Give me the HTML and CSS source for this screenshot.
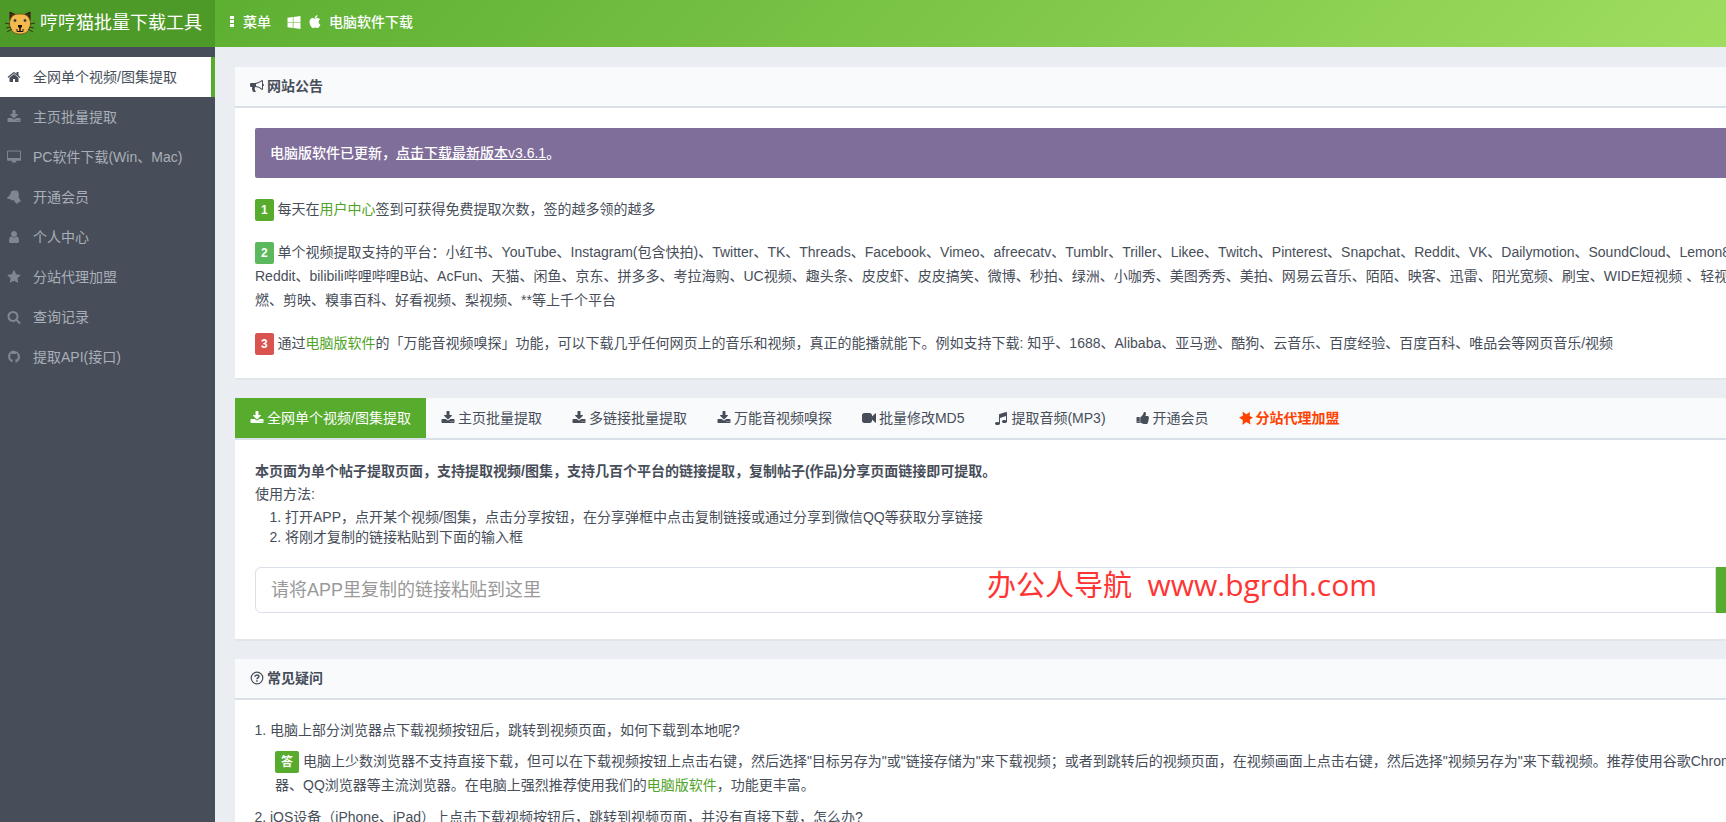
FILE: index.html
```html
<!DOCTYPE html>
<html lang="zh-CN">
<head>
  <meta charset="utf-8">
  <title>哼哼猫批量下载工具</title>
  <meta name="viewport" content="width=device-width, initial-scale=1">
  <link rel="stylesheet" href="styles.css">
</head>
<body>

  <!-- icon set -->
  <svg class="icon-defs" aria-hidden="true">
    <symbol id="i-home" viewBox="0 0 1792 1792"><path d="M1472 992v480q0 26-19 45t-45 19h-384v-384h-256v384h-384q-26 0-45-19t-19-45v-480q0-1 .5-3t.5-3l575-474 575 474q1 2 1 6zm223-69l-62 74q-8 9-21 11h-3q-13 0-21-7l-692-577-692 577q-12 8-24 7-13-2-21-11l-62-74q-8-10-7-23.5t11-21.5l719-599q32-26 76-26t76 26l244 204v-195q0-14 9-23t23-9h192q14 0 23 9t9 23v408l219 182q10 8 11 21.5t-7 23.5z"/></symbol>
    <symbol id="i-download" viewBox="0 0 1792 1792"><path d="M1344 1344q0-26-19-45t-45-19-45 19-19 45 19 45 45 19 45-19 19-45zm256 0q0-26-19-45t-45-19-45 19-19 45 19 45 45 19 45-19 19-45zm128-224v320q0 40-28 68t-68 28h-1472q-40 0-68-28t-28-68v-320q0-40 28-68t68-28h465l135 136q58 56 136 56t136-56l136-136h464q40 0 68 28t28 68zm-325-569q17 41-14 70l-448 448q-18 19-45 19t-45-19l-448-448q-31-29-14-70 17-39 59-39h256v-448q0-26 19-45t45-19h256q26 0 45 19t19 45v448h256q42 0 59 39z"/></symbol>
    <symbol id="i-desktop" viewBox="-64 0 1920 1792"><path d="M1728 992v-832q0-13-9.5-22.5t-22.5-9.5h-1600q-13 0-22.5 9.5t-9.5 22.5v832q0 13 9.5 22.5t22.5 9.5h1600q13 0 22.5-9.5t9.5-22.5zm128-832v1088q0 66-47 113t-113 47h-544q0 37 16 77.5t32 71 16 43.5q0 26-19 45t-45 19h-512q-26 0-45-19t-19-45q0-14 16-44t32-70 16-78h-544q-66 0-113-47t-47-113v-1088q0-66 47-113t113-47h1600q66 0 113 47t47 113z"/></symbol>
    <symbol id="i-vip" viewBox="0 0 14 14"><path d="M4 1.500C6 .2 8.500.2 10.500.8L12 4l-.5 3L14 11.500l-2.500.5-1 2-2.500-1.500-1-2.500-2 .5-2-1.500L.8 9 0 7.500 2 6l1.500-2z"/></symbol>
    <symbol id="i-user" viewBox="0 0 1792 1792"><path d="M1536 1399q0 109-62.5 187t-150.5 78h-854q-88 0-150.5-78t-62.5-187q0-85 8.5-160.5t31.5-152 58.5-131 94-89 134.5-34.5q131 128 313 128t313-128q76 0 134.5 34.5t94 89 58.5 131 31.5 152 8.5 160.5zm-256-887q0 159-112.5 271.5t-271.5 112.5-271.5-112.5-112.5-271.5 112.5-271.5 271.5-112.5 271.5 112.5 112.5 271.5z"/></symbol>
    <symbol id="i-star" viewBox="0 0 1792 1792"><path d="M1728 647q0 22-26 48l-363 354 86 500q1 7 1 20 0 21-10.5 35.5t-30.5 14.5q-19 0-40-12l-449-236-449 236q-22 12-40 12-21 0-31.5-14.5t-10.5-35.5q0-6 2-20l86-500-364-354q-25-27-25-48 0-37 56-46l502-73 225-455q19-41 49-41t49 41l225 455 502 73q56 9 56 46z"/></symbol>
    <symbol id="i-search" viewBox="0 0 1792 1792"><path d="M1216 832q0-185-131.5-316.5t-316.5-131.5-316.5 131.5-131.5 316.5 131.5 316.5 316.5 131.5 316.5-131.5 131.5-316.5zm512 832q0 52-38 90t-90 38q-54 0-90-38l-343-342q-179 124-399 124-143 0-273.5-55.5t-225-150-150-225-55.5-273.5 55.5-273.5 150-225 225-150 273.5-55.5 273.5 55.5 225 150 150 225 55.5 273.5q0 220-124 399l343 343q37 37 37 90z"/></symbol>
    <symbol id="i-github" viewBox="0 0 1792 1792"><path d="M896 128q209 0 385.500 103t279.500 279.500 103 385.500q0 251-146.500 451.500t-378.500 277.500q-27 5-40-7t-13-30q0-3 .5-76.500t.5-134.500q0-97-52-142 57-6 102.500-18t94-39 81-66.500 53-105 20.500-150.500q0-119-79-206 37-91-8-204-28-9-81 11t-92 44l-38 24q-93-26-192-26t-192 26q-16-11-42.500-27t-83.500-38.500-85-13.500q-45 113-8 204-79 87-79 206 0 85 20.500 150t52.500 105 80.500 67 94 39 102.500 18q-39 36-49 103v186q0 18-13 30t-40 7q-232-77-378.500-277.500t-146.500-451.500q0-209 103-385.500t279.500-279.500 385.500-103z"/></symbol>
    <symbol id="i-windows" viewBox="0 0 1792 1792"><path d="M746 1006v651l-682-94v-557h682zm0-743v659h-682v-565zm982 743v786l-907-125v-661h907zm0-878v794h-907v-669z"/></symbol>
    <symbol id="i-apple" viewBox="0 0 1792 1792"><path d="M1585 1215q-39 125-123 250-129 196-257 196-49 0-140-32-86-32-151-32-61 0-142 33-81 34-132 34-152 0-301-259-147-261-147-503 0-228 113-374 113-144 284-144 72 0 177 30 104 30 138 30 45 0 143-34 102-34 173-34 119 0 213 65 52 36 104 100-79 67-114 118-65 94-65 207 0 124 69 223t158 126zm-376-1173q0 61-29 136-30 75-93 138-54 54-108 72-37 11-104 17 3-149 78-257 74-107 250-148 1 3 2.500 11t2.500 11q0 4 .5 10t.5 10z"/></symbol>
    <symbol id="i-dots" viewBox="0 0 4 12"><path d="M0 0h4v3H0zM0 4h4v3H0zM0 8h4v3H0z"/></symbol>
    <symbol id="i-bullhorn" viewBox="0 0 1792 1792"><path d="M1664 640q53 0 90.500 37.500t37.500 90.500-37.500 90.500-90.500 37.500v384q0 52-38 90t-90 38q-417-347-812-380-58 19-91 66t-31 100.500 40 92.500q-20 33-23 65.500t6 58 33.500 55 48 50 61.500 50.500q-29 58-111.500 83t-168.500 11.500-132-55.500q-7-23-29.500-87.500t-32-94.500-23-89-15-101 3.500-98.500 22-110.500h-122q-66 0-113-47t-47-113v-192q0-66 47-113t113-47h480q435 0 896-384 52 0 90 38t38 90v384zm-128 604v-954q-394 302-768 343v270q377 42 768 341z"/></symbol>
    <symbol id="i-video" viewBox="0 0 1792 1792"><path d="M1792 352v1088q0 42-39 59-13 5-25 5-27 0-45-19l-403-403v166q0 119-84.500 203.500t-203.500 84.500h-704q-119 0-203.500-84.500t-84.500-203.500v-704q0-119 84.500-203.500t203.500-84.500h704q119 0 203.500 84.500t84.500 203.500v165l403-402q18-19 45-19 12 0 25 5 39 17 39 59z"/></symbol>
    <symbol id="i-music" viewBox="0 0 1792 1792"><path d="M1664 224v1120q0 50-34 89t-86 60.500-103.500 32-96.500 10.500-96.500-10.500-103.500-32-86-60.500-34-89 34-89 86-60.500 103.500-32 96.500-10.500q105 0 192 39v-537l-768 237v709q0 50-34 89t-86 60.500-103.500 32-96.500 10.500-96.500-10.500-103.500-32-86-60.500-34-89 34-89 86-60.500 103.500-32 96.500-10.500q105 0 192 39v-967q0-31 19-56.500t49-35.500l832-256q12-4 28-4 40 0 68 28t28 68z"/></symbol>
    <symbol id="i-thumb" viewBox="0 0 1792 1792"><path d="M320 1344q0-26-19-45t-45-19q-27 0-45.500 19t-18.500 45q0 27 18.500 45.500t45.500 18.500q26 0 45-18.500t19-45.500zm160-512v640q0 26-19 45t-45 19h-288q-26 0-45-19t-19-45v-640q0-26 19-45t45-19h288q26 0 45 19t19 45zm1184 0q0 86-55 149 15 44 15 76 3 76-43 137 17 56 0 117-15 57-54 94 9 112-49 181-64 76-197 78h-129q-66 0-144-15.500t-121.500-29-120.500-39.500q-123-43-158-44-26-1-45-19.500t-19-44.500v-641q0-25 18-43.500t43-20.500q24-2 76-59t101-121q68-87 101-120 18-18 31-48t17.500-48.500 13.500-60.500q7-39 12.500-61t19.500-52 34-50q19-19 45-19 46 0 82.500 10.500t60 26 40 40.500 24 45 12 50 5 45 .5 39q0 38-9.500 76t-19 60-27.500 56q-3 6-10 18t-11 22-8 24h277q78 0 135 57t57 135z"/></symbol>
    <symbol id="i-question" viewBox="0 0 14 14"><circle cx="7" cy="7" r="5.800" fill="none" stroke="currentColor" stroke-width="1.200"/><path d="M5 5.700C5.200 3.300 9 3.400 8.900 5.500 8.800 6.800 7 6.700 7 8.300" fill="none" stroke="currentColor" stroke-width="1.500"/><path d="M6.200 9.200h1.500v1.500H6.200z"/></symbol>
    <symbol id="i-join" viewBox="0 0 14 14"><path d="M3.500.5l3.800 2.700L11 1l-.3 4 3.300 1.500-3.200 2.300.7 4.700L7.300 11l-3.800 3 .3-5L0 6.500l4-1.700z"/></symbol>
  </svg>

  <header class="header">
    <a class="brand" href="#">
      <svg class="brand-logo" viewBox="0 0 30 24" aria-hidden="true">
        <path d="M5 9L5 1l6 3M25 9l0-8-6 3" fill="#4a2b16" stroke="#2a1a0c"/>
        <path d="M15 3c5 0 7 1 9 4 2 4 2 8 0 11-2 4-5 5-9 5s-7-1-9-5c-2-3-2-7 0-11 2-3 4-4 9-4z" fill="#f3b94e" stroke="#6b4a17" stroke-width=".8"/>
        <path d="M0 12l5 1M1 17l5-1M2 21l5-3M30 12l-5 1M29 17l-5-1M28 21l-5-3" fill="none" stroke="#2a1a0c" stroke-width=".8"/>
        <circle cx="10" cy="9.500" r="1.700" fill="#8c8a5c"/>
        <circle cx="20" cy="9.500" r="1.700" fill="#8c8a5c"/>
        <circle cx="10" cy="9.500" r=".9" fill="#1c120a"/>
        <circle cx="20" cy="9.500" r=".9" fill="#1c120a"/>
        <path d="M13 14h4v2l-2 1.500-2-1.500z" fill="#1c120a"/>
        <path d="M12 18v2.500h3V17v3.500h3V18" fill="none" stroke="#1c120a"/>
      </svg>
      <span>哼哼猫批量下载工具</span>
    </a>
    <nav class="top-nav">
      <button type="button" class="top-link"><svg class="icon icon-dots"><use href="#i-dots"/></svg>菜单</button>
      <a class="top-link" href="#"><svg class="icon"><use href="#i-windows"/></svg><svg class="icon"><use href="#i-apple"/></svg>电脑软件下载</a>
    </nav>
  </header>

  <div class="layout">
    <nav class="sidebar">
      <a class="side-link active" href="#"><svg class="icon"><use href="#i-home"/></svg>全网单个视频/图集提取</a>
      <a class="side-link" href="#"><svg class="icon"><use href="#i-download"/></svg>主页批量提取</a>
      <a class="side-link" href="#"><svg class="icon"><use href="#i-desktop"/></svg>PC软件下载(Win、Mac)</a>
      <a class="side-link" href="#"><svg class="icon"><use href="#i-vip"/></svg>开通会员</a>
      <a class="side-link" href="#"><svg class="icon"><use href="#i-user"/></svg>个人中心</a>
      <a class="side-link" href="#"><svg class="icon"><use href="#i-star"/></svg>分站代理加盟</a>
      <a class="side-link" href="#"><svg class="icon"><use href="#i-search"/></svg>查询记录</a>
      <a class="side-link" href="#"><svg class="icon"><use href="#i-github"/></svg>提取API(接口)</a>
    </nav>

    <main class="content">
      <section class="panel">
        <h2 class="panel-title"><svg class="icon"><use href="#i-bullhorn"/></svg>网站公告</h2>
        <div class="panel-body notice">
          <div class="alert">电脑版软件已更新，<a href="#">点击下载最新版本v3.6.1</a>。</div>
          <p><span class="badge">1</span> 每天在<a href="#">用户中心</a>签到可获得免费提取次数，签的越多领的越多</p>
          <p><span class="badge badge-success">2</span> 单个视频提取支持的平台：小红书、YouTube、Instagram(包含快拍)、Twitter、TK、Threads、Facebook、Vimeo、afreecatv、Tumblr、Triller、Likee、Twitch、Pinterest、Snapchat、Reddit、VK、Dailymotion、SoundCloud、Lemon8、<br>Reddit、bilibili哔哩哔哩B站、AcFun、天猫、闲鱼、京东、拼多多、考拉海购、UC视频、趣头条、皮皮虾、皮皮搞笑、微博、秒拍、绿洲、小咖秀、美图秀秀、美拍、网易云音乐、陌陌、映客、迅雷、阳光宽频、刷宝、WIDE短视频 、轻视频、<br>燃、剪映、糗事百科、好看视频、梨视频、**等上千个平台</p>
          <p><span class="badge badge-danger">3</span> 通过<a href="#">电脑版软件</a>的「万能音视频嗅探」功能，可以下载几乎任何网页上的音乐和视频，真正的能播就能下。例如支持下载: 知乎、1688、Alibaba、亚马逊、酷狗、云音乐、百度经验、百度百科、唯品会等网页音乐/视频</p>
        </div>
      </section>

      <section class="panel">
        <nav class="tabs">
          <a class="tab active" href="#"><svg class="icon"><use href="#i-download"/></svg>全网单个视频/图集提取</a>
          <a class="tab" href="#"><svg class="icon"><use href="#i-download"/></svg>主页批量提取</a>
          <a class="tab" href="#"><svg class="icon"><use href="#i-download"/></svg>多链接批量提取</a>
          <a class="tab" href="#"><svg class="icon"><use href="#i-download"/></svg>万能音视频嗅探</a>
          <a class="tab" href="#"><svg class="icon"><use href="#i-video"/></svg>批量修改MD5</a>
          <a class="tab" href="#"><svg class="icon"><use href="#i-music"/></svg>提取音频(MP3)</a>
          <a class="tab" href="#"><svg class="icon"><use href="#i-thumb"/></svg>开通会员</a>
          <a class="tab tab-hot" href="#"><svg class="icon"><use href="#i-join"/></svg>分站代理加盟</a>
        </nav>
        <div class="panel-body extract">
          <p><strong>本页面为单个帖子提取页面，支持提取视频/图集，支持几百个平台的链接提取，复制帖子(作品)分享页面链接即可提取。</strong></p>
          <p>使用方法:</p>
          <ol class="steps">
            <li>打开APP，点开某个视频/图集，点击分享按钮，在分享弹框中点击复制链接或通过分享到微信QQ等获取分享链接</li>
            <li>将刚才复制的链接粘贴到下面的输入框</li>
          </ol>
          <form class="link-form">
            <input class="link-input" type="text" aria-label="分享链接" placeholder="请将APP里复制的链接粘贴到这里">
            <button class="link-submit" type="button" aria-label="提取"></button>
            <span class="site-mark">办公人导航<span class="site-url">&nbsp; www.bgrdh.com</span></span>
          </form>
        </div>
      </section>

      <section class="panel">
        <h2 class="panel-title"><svg class="icon"><use href="#i-question"/></svg>常见疑问</h2>
        <div class="panel-body">
          <ol class="faq">
            <li>电脑上部分浏览器点下载视频按钮后，跳转到视频页面，如何下载到本地呢?
              <p class="answer"><span class="badge">答</span> 电脑上少数浏览器不支持直接下载，但可以在下载视频按钮上点击右键，然后选择"目标另存为"或"链接存储为"来下载视频；或者到跳转后的视频页面，在视频画面上点击右键，然后选择"视频另存为"来下载视频。推荐使用谷歌Chrome浏览<br>器、QQ浏览器等主流浏览器。在电脑上强烈推荐使用我们的<a href="#">电脑版软件</a>，功能更丰富。</p>
            </li>
            <li>iOS设备（iPhone、iPad）上点击下载视频按钮后，跳转到视频页面，并没有直接下载，怎么办?</li>
          </ol>
        </div>
      </section>
    </main>
  </div>

</body>
</html>
```
FILE: styles.css
```css
* {
  box-sizing: border-box;
}

body {
  margin: 0;
  height: 100vh;
  overflow: hidden;
  display: flex;
  flex-direction: column;
  background: #eaedf2;
  color: #474e59;
  font-family: "Liberation Sans", "Noto Sans CJK SC", sans-serif;
  font-size: 14px;
  line-height: 24px;
}

a {
  color: #4fa326;
  text-decoration: none;
}

p {
  margin: 0;
}

.icon-defs {
  position: absolute;
  width: 0;
  height: 0;
}

.icon {
  width: 14px;
  height: 14px;
  flex: none;
  fill: currentColor;
}

/* header */
.header {
  display: flex;
  flex: none;
  height: 47px;
  background: linear-gradient(135deg, #54a92c 0%, #9fdd5f 100%);
}

.brand {
  display: flex;
  align-items: center;
  gap: 5px;
  width: 215px;
  padding: 0 5px 2px;
  background: #4e9a29;
  color: #fff;
  font-size: 18px;
}

.brand-logo {
  width: 30px;
  height: 24px;
}

.top-nav {
  display: flex;
  align-items: center;
  gap: 16px;
  padding: 0 13px 4px;
}

.top-link {
  display: flex;
  align-items: center;
  gap: 7px;
  padding: 0;
  border: 0;
  background: none;
  color: #fff;
  font: inherit;
  font-weight: 500;
  cursor: pointer;
}

.icon-dots {
  width: 8px;
  height: 12px;
}

/* layout */
.layout {
  display: flex;
  flex: 1;
  min-height: 0;
}

.sidebar {
  flex: none;
  width: 215px;
  padding-top: 10px;
  background: #474e59;
}

.side-link {
  display: flex;
  align-items: center;
  gap: 12px;
  height: 40px;
  padding-left: 7px;
  color: #a9aeb8;
}

.side-link .icon {
  opacity: 0.6;
}

.side-link.active {
  border-right: 4px solid #57ab2d;
  background: #fff;
  color: #474e59;
}

.side-link.active .icon {
  opacity: 1;
}

/* the content column runs past the right edge of narrow windows */
.content {
  display: flex;
  flex: 1 0 1688px;
  flex-direction: column;
  gap: 18px;
  padding: 20px;
}

.panel {
  flex: none;
  border-bottom: 2px solid #e1e6eb;
  border-radius: 2px;
  background: #fff;
  white-space: nowrap;
}

.panel-title {
  display: flex;
  align-items: center;
  gap: 3px;
  height: 41px;
  margin: 0;
  padding: 0 15px 2px;
  border-bottom: 2px solid #dae0e8;
  background: #f9fafc;
  font-size: 14px;
}

.panel-body {
  padding: 18px 20px;
}

.alert {
  padding: 13px 15px;
  border-radius: 2px;
  background: #7f6d9a;
  color: #fff;
  font-weight: 500;
}

.alert a {
  color: #fff;
  text-decoration: underline;
}

.notice {
  display: flex;
  flex-direction: column;
  gap: 19px;
  padding: 20px 20px 23px;
}

.badge {
  display: inline-block;
  padding: 0 6px;
  border-radius: 2px;
  background: #57ab2d;
  color: #fff;
  font-size: 12px;
  font-weight: bold;
  line-height: 22px;
}

.badge-success {
  background: #5cb85c;
}

.badge-danger {
  background: #d9534f;
}

/* tabs */
.tabs {
  display: flex;
  height: 42px;
  border-bottom: 2px solid #dae0e8;
  background: #f9fafc;
}

.tab {
  display: flex;
  align-items: center;
  gap: 3px;
  padding: 0 15px;
  color: #474e59;
}

.tab.active {
  background: #57ab2d;
  color: #fff;
}

.tab-hot {
  color: #ff4200;
  font-weight: bold;
}

.extract {
  padding: 20px 20px 26px;
  line-height: 23px;
}

.steps {
  margin: 1px 0 20px;
  padding-left: 30px;
  line-height: 20px;
}

.link-form {
  position: relative;
  display: flex;
}

.link-input {
  flex: 1;
  height: 46px;
  padding: 0 15px;
  border: 1px solid #dae0e8;
  border-radius: 6px 0 0 6px;
  background: #fff;
  font: inherit;
  font-size: 18px;
}

.link-input::placeholder {
  color: #999;
}

.link-submit {
  width: 147px;
  border: 0;
  border-radius: 0 6px 6px 0;
  background: #57ab2d;
}

.site-mark {
  position: absolute;
  top: 0;
  left: 732px;
  color: #ff3534;
  font-family: "Open Sans", "Noto Sans CJK SC", sans-serif;
  font-size: 29px;
  line-height: 36px;
}

.site-url {
  font-size: 30px;
}

.faq {
  margin: 0;
  padding-left: 15px;
}

.answer {
  padding: 7px 5px 8px;
}
```
